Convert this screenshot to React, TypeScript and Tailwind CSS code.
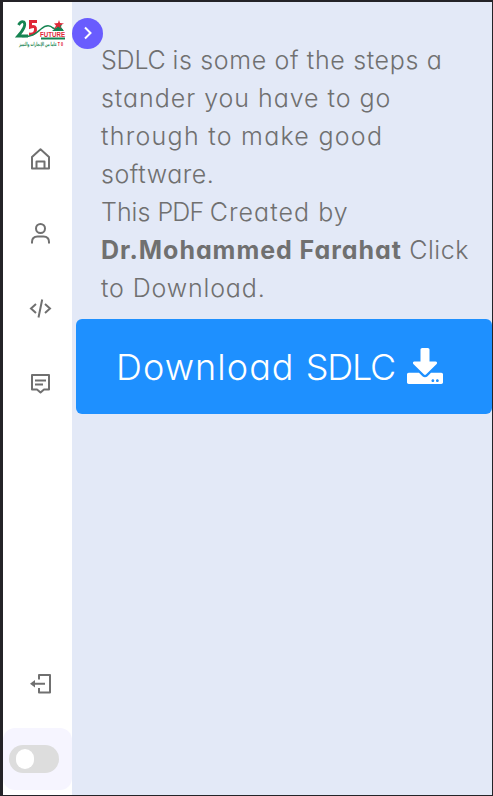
import type { ReactNode } from "react";
import { FaDownload } from "react-icons/fa";

type Word = [string, string];

const copy: Word[][] = [
  [["SDLC ", "tracking-[-0.2px]"], ["is some of the steps a", "tracking-[0.65px]"]],
  [["stander you have to go", "tracking-[0.96px]"]],
  [["through to make good", "tracking-[1.26px]"]],
  [["software.", "tracking-[0.5px]"]],
  [["This ", "tracking-normal"], ["PDF ", "tracking-[-0.8px]"], ["Created by", "tracking-[1.05px]"]],
  [["Dr.Mohammed Farahat", "font-bold tracking-[0.95px]"], [" Click", "tracking-[0.5px]"]],
  [["to Download.", "tracking-[0.85px]"]],
];

function Icon({ children }: { children: ReactNode }) {
  return (
    <svg width="26" height="26" viewBox="0 0 26 26" fill="none" stroke="currentColor" strokeWidth="2">
      {children}
    </svg>
  );
}

function Logo() {
  return (
    <svg width="56" height="34" viewBox="0 0 56 34">
      <path d="M4.5 9Q7 4.5 10 6Q13 10 4 20H14" fill="none" stroke="#168452" strokeWidth="2.8" />
      <path d="M23 5.5H16.5V11Q22 9 21.5 14Q21 19 15 18" fill="none" stroke="#df2737" strokeWidth="3" />
      <path d="M8 20.5C19 21 22 17 27 13Q34 7 39 12L44 14H49" fill="none" stroke="#168452" strokeWidth="1.5" />
      <path d="M44 8L48 8 47 11 50 15H38L43 11z" fill="#168452" />
      <path d="M45 4l1 3 4 0.5-4 2 1 3-3-2-4 3 2-4-2-2 4-0.5z" fill="#df2737" />
      <text x="26" y="21" fontSize="7" textLength="25" lengthAdjust="spacingAndGlyphs" fill="#df2737" className="font-['Liberation_Sans',sans-serif] font-bold">FUTURE</text>
      <rect x="27" y="21.5" width="24" height="2" fill="#168452" />
      <text x="5" y="30" fontSize="5.5" textLength="44" lengthAdjust="spacingAndGlyphs" direction="ltr" fill="#168452" className="font-['DejaVu_Sans',sans-serif] font-bold">
        عاما من الإنجازات والتميز<tspan fill="#df2737"> T 0</tspan>
      </text>
    </svg>
  );
}

export default function App() {
  return (
    <div className="flex h-[796px] w-[493px] overflow-hidden border-t-2 border-r border-b border-l-[3px] border-[#242328] bg-[#e3e9f7] font-['Inter',sans-serif] font-light text-[#707070] [font-feature-settings:'cv11']">
      <aside className="relative flex w-[69px] shrink-0 flex-col bg-white">
        <div className="mt-[14px] ml-[11px] h-[34px]"><Logo /></div>
        <button aria-label="Expand" className="absolute top-4 left-[69px] flex size-[31px] items-center justify-center rounded-full bg-[#695cfe] text-white">
          <svg width="12" height="16" viewBox="0 0 12 16" fill="none" stroke="currentColor" strokeWidth="2">
            <path d="M3 1.5L8.5 7 3 12.5" />
          </svg>
        </button>
        <nav className="mt-[96px] ml-[24px] flex flex-col gap-[49px]">
          <Icon>
            <path d="M5 11L13.5 3.3 22 11V22.5H5zM9.5 22V15.5H17.5V22" strokeLinejoin="round" />
          </Icon>
          <Icon>
            <circle cx="13.5" cy="7.5" r="4.5" />
            <path d="M5 22.5V21Q5 15.5 10.5 15.5H16.5Q22 15.5 22 21V22.5" />
          </Icon>
          <Icon>
            <path d="M9 8L4 12.5 9 17M18 8L23 12.5 18 17M15.2 3.5L11.5 21.5" />
          </Icon>
          <Icon>
            <path d="M5 4H22V18.5H17L13.5 21.5 10 18.5H5zM8 9.5H19M8 13.5H16" strokeLinejoin="round" />
          </Icon>
        </nav>
        <div className="mt-auto ml-[24px] h-[26px]">
          <Icon>
            <path d="M12 8.5V4H23V21.5H12V17M18 12.8H7" strokeLinejoin="round" />
            <path d="M8 9V16.5L3 12.8z" fill="currentColor" stroke="none" />
          </Icon>
        </div>
        <div className="mt-[31px] mb-[5px] flex h-[62px] items-center rounded-xl bg-[#f6f5ff] pl-[6px]">
          <div className="flex h-7 w-[50px] items-center rounded-full bg-[#ddd] pl-[7px]">
            <div className="h-[20px] w-[18px] rounded-full bg-white" />
          </div>
        </div>
      </aside>
      <main className="min-w-0 flex-1 pt-[39px] pl-1">
        <p className="pl-[25px] text-[25px] leading-[38px] whitespace-pre">
          {copy.map((line) => (
            <span key={line[0][0]} className="block">
              {line.map(([text, style]) => <span key={text} className={style}>{text}</span>)}
            </span>
          ))}
        </p>
        <a className="mt-[12px] flex h-[95px] w-[416px] items-center rounded-[6px] bg-[#1e90ff] pl-[40px] text-[36px] whitespace-pre text-white">
          <span><span className="tracking-[1.05px]">Download </span><span className="tracking-[-1.2px]">SDLC</span></span>
          <FaDownload size={36} className="relative -top-px mr-[49px] ml-auto" />
        </a>
      </main>
    </div>
  );
}
